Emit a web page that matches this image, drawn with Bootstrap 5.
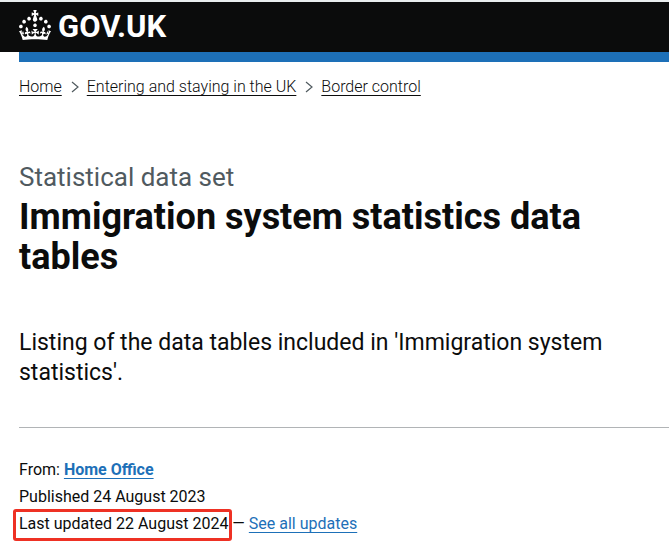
<!DOCTYPE html>
<html lang="en">
<head>
<meta charset="utf-8">
<meta name="viewport" content="width=device-width, initial-scale=1">
<title>Immigration system statistics data tables - GOV.UK</title>
<link href="https://cdn.jsdelivr.net/npm/bootstrap@5.3.0/dist/css/bootstrap.min.css" rel="stylesheet">
<style>
body { font-family: Roboto, "Noto Sans", sans-serif; font-size: 16px; line-height: 20px; color: #0b0c0c; background: #fff; }
.gutter { padding-left: 19px; }
.site-header { background: #0b0c0c; border-top: 2px solid #e9eeef; height: 52px; }
.brand { font-size: 31px; line-height: 32px; font-weight: 700; gap: 7px; }
.blue-bar { height: 10px; background: #1d70b8; margin-left: 19px; }
.crumbs { padding-top: 15px; font-weight: 300; }
.crumbs a, .updates a { text-underline-offset: 3px; text-decoration-thickness: 1px; }
.crumbs a { color: #0b0c0c; }
.chevron { margin: 0 8px 0 9px; }
.caption { font-size: 26px; line-height: 30px; color: #505a5f; margin-top: 65px; }
.title { font-size: 36px; line-height: 40px; font-weight: 700; margin: 5px 0 0; }
.intro { font-size: 23px; line-height: 30px; margin: 51px 0 0; }
.updates { border-top: 1px solid #b1b4b6; margin: 39px 0 0 19px; padding: 28px 0 20px; line-height: 27px; }
.updates a { color: #1d70b8; }
.marked { position: relative; }
.marked::after { content: ""; position: absolute; inset: -5px -4px -8px -6px; border: 3px solid #ee3124; border-radius: 3px; }
</style>
</head>
<body>
<header>
  <div class="site-header gutter d-flex align-items-center">
    <a href="#" class="brand d-flex align-items-center text-white text-decoration-none">
      <svg class="mb-1" width="32" height="30" viewBox="0 0 32 30" fill="currentColor" aria-hidden="true"><path d="M22.6 10.4c-1 .4-2-.1-2.4-1-.4-.9.1-2 1-2.4.9-.4 2 .1 2.4 1s-.1 2-1 2.4m-5.9 6.7c-.9.4-2-.1-2.4-1-.4-.9.1-2 1-2.4.9-.4 2 .1 2.4 1s-.1 2-1 2.4m10.8-3.7c-1 .4-2-.1-2.4-1-.4-.9.1-2 1-2.4.9-.4 2 .1 2.4 1s0 2-1 2.4m3.3 4.8c-1 .4-2-.1-2.4-1-.4-.9.1-2 1-2.4.9-.4 2 .1 2.4 1s-.1 2-1 2.4M17 4.7l2.3 1.2V2.5l-2.3.7-.2-.2.9-3h-3.4l.9 3-.2.2c-.1.1-2.3-.7-2.3-.7v3.4L15 4.7c.1.1.1.2.2.2l-1.3 4c-.1.2-.1.4-.1.6 0 1.1.8 2 1.9 2.2h.7c1-.2 1.9-1.1 1.9-2.1 0-.2 0-.4-.1-.6l-1.3-4c-.1-.2 0-.2.1-.3m-7.6 5.7c.9.4 2-.1 2.4-1 .4-.9-.1-2-1-2.4-.9-.4-2 .1-2.4 1s0 2 1 2.4m-5 3c.9.4 2-.1 2.4-1 .4-.9-.1-2-1-2.4-.9-.4-2 .1-2.4 1s.1 2 1 2.4m-3.2 4.8c.9.4 2-.1 2.4-1 .4-.9-.1-2-1-2.4-.9-.4-2 .1-2.4 1s0 2 1 2.4m14.8 11c4.4 0 8.6.3 12.3.8 1.1-4.5 2.4-7 3.7-8.8l-2.5-.9c.2 1.3.3 1.9 0 2.7-.4-.4-.8-1.1-1.1-2.3l-1.2 4c.7-.5 1.3-.8 2-.9-1.1 2.5-2.6 3.1-3.5 3-1.1-.2-1.7-1.2-1.5-2.1.3-1.2 1.5-1.5 2.1-.1 1.1-2.3-.8-3-2-2.3 1.9-1.9 2.1-3.5.6-5.6-2.1 1.6-2.1 3.2-1.2 5.5-1.2-1.4-3.2-.6-2.5 1.6.9-1.4 2.1-.5 1.9.8-.2 1.1-1.7 2.1-3.5 1.9-2.7-.2-2.9-2.1-2.9-3.6.7-.1 1.9.5 2.9 1.9l.4-4.3c-1.1 1.1-2.1 1.4-3.2 1.4.4-1.2 2.1-3 2.1-3h-5.4s1.7 1.9 2.1 3c-1.1 0-2.1-.2-3.2-1.4l.4 4.3c1-1.4 2.2-2 2.9-1.9-.1 1.5-.2 3.4-2.9 3.6-1.9.2-3.4-.8-3.5-1.9-.2-1.3 1-2.2 1.9-.8.7-2.3-1.2-3-2.5-1.6.9-2.2.9-3.9-1.2-5.5-1.5 2-1.3 3.7.6 5.6-1.2-.7-3.1 0-2 2.3.6-1.4 1.8-1.1 2.1.1.2.9-.3 1.9-1.5 2.1-.9.2-2.4-.5-3.5-3 .6 0 1.2.3 2 .9l-1.2-4c-.3 1.1-.7 1.9-1.1 2.3-.3-.8-.2-1.4 0-2.7l-2.9.9C1.3 23 2.6 25.5 3.7 30c3.7-.5 7.9-.8 12.3-.8"/></svg>
      <span>GOV.UK</span>
    </a>
  </div>
  <div class="blue-bar"></div>
</header>
<nav class="crumbs gutter" aria-label="Breadcrumb">
  <ol class="list-unstyled d-flex flex-wrap align-items-center mb-0">
    <li><a href="#">Home</a></li>
    <li class="d-flex align-items-center"><svg class="chevron" width="8" height="12" viewBox="0 0 8 12" fill="none" stroke="#505a5f" stroke-width="1.2" aria-hidden="true"><path d="M1 1l6 5-6 5"/></svg><a href="#">Entering and staying in the UK</a></li>
    <li class="d-flex align-items-center"><svg class="chevron" width="8" height="12" viewBox="0 0 8 12" fill="none" stroke="#505a5f" stroke-width="1.2" aria-hidden="true"><path d="M1 1l6 5-6 5"/></svg><a href="#">Border control</a></li>
  </ol>
</nav>
<main>
  <div class="gutter pe-3">
    <p class="caption mb-0">Statistical data set</p>
    <h1 class="title">Immigration system statistics data tables</h1>
    <p class="intro">Listing of the data tables included in 'Immigration system statistics'.</p>
  </div>
  <div class="updates">
    <div>From: <a class="fw-bold" href="#">Home Office</a></div>
    <div>Published 24 August 2023</div>
    <div><span class="marked">Last updated 22 August 2024</span> — <a href="#">See all updates</a></div>
  </div>
</main>
<script src="https://cdn.jsdelivr.net/npm/bootstrap@5.3.0/dist/js/bootstrap.bundle.min.js"></script>
</body>
</html>
